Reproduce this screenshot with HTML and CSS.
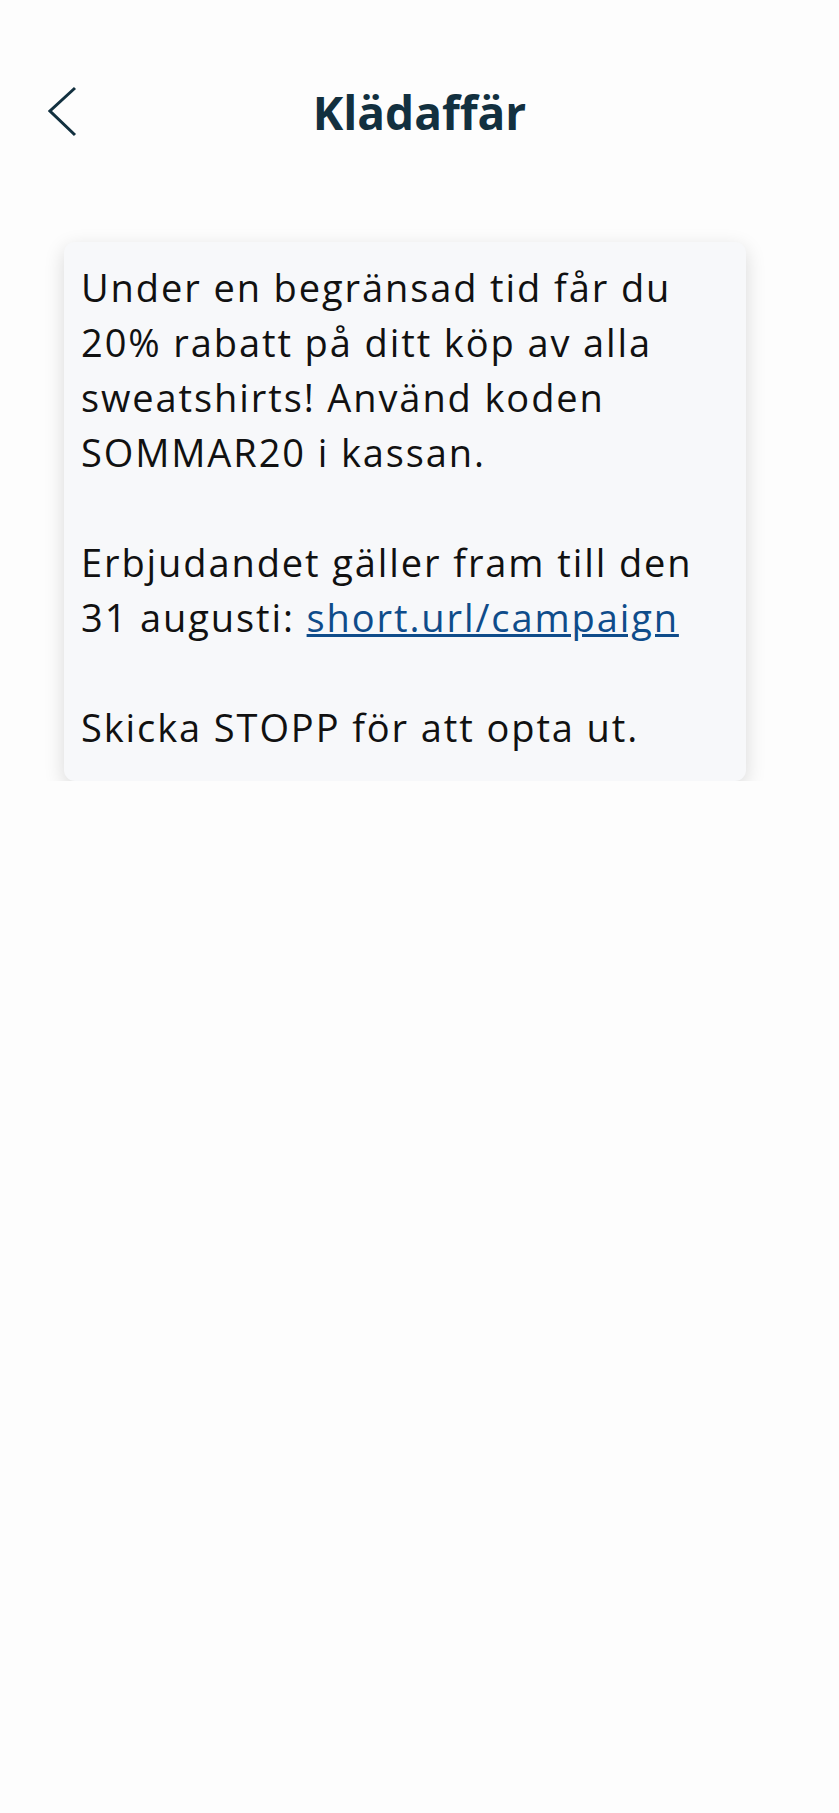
FILE: index.html
```html
<!DOCTYPE html>
<html>
    <head>
        <meta charset="utf-8" />
        <title>Klädaffär</title>
        <link rel="stylesheet" href="styles.css">
    </head>
    <body>
        <div class="top_bar">
            <a class="back_btn" href="#">
                <svg width="30" height="52" viewBox="0 0 30 52">
                    <polyline points="27,2 2,25 27,49" fill="none" stroke="#12303f" stroke-width="3"/>
                </svg>
            </a>
            <h1>Klädaffär</h1>
            <span></span>
        </div>
        <div class="msg_card">
            <p>Under en begränsad tid får du 20% rabatt på ditt köp av alla sweatshirts! Använd koden SOMMAR20 i kassan.</p>
            <p>Erbjudandet gäller fram till den 31 augusti: <a href="#">short.url/campaign</a></p>
            <p>Skicka STOPP för att opta ut.</p>
        </div>
    </body>
</html>
```
FILE: styles.css
```css
body{
    margin:0;
    background:#fdfdfd;
    font-family:"Open Sans","Noto Sans",sans-serif;
    color:#111;
}
/*顶部 返回 + 标题*/
.top_bar{
    display:grid;
    grid-template-columns:1fr auto 1fr;
    align-items:center;
    padding-top:80px;
}
.back_btn{
    display:flex;
    padding-left:48px;
}
.top_bar h1{
    margin:0;
    font-size:46px;
    line-height:64px;
    font-weight:700;
    color:#12303f;
}
.msg_card{
    width:682px;
    box-sizing:border-box;
    margin:98px 0 0 64px;
    padding:18px 10px 26px 17px;
    background:#f7f8fa;
    border-radius:11px;
    box-shadow:0 6px 20px rgba(0,0,0,0.15);
}
/*正文字偏宽 用字距补*/
.msg_card p{
    margin:0 0 55px;
    font-size:38px;
    line-height:55px;
    letter-spacing:1.9px;
}
.msg_card p:last-child{
    margin-bottom:0;
}
.msg_card a{
    color:#0f4c8a;
}
```
